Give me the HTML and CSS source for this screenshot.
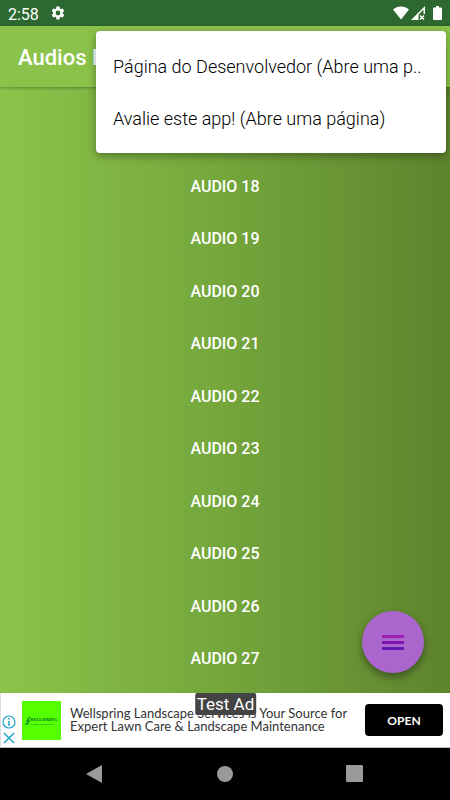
FILE: index.html
```html
<!DOCTYPE html>
<html lang="pt-BR">

    <head>
        <meta charset="UTF-8">
        <meta name="viewport" content="width=device-width, initial-scale=1.0">
        <title>Audios</title>
        <link rel="stylesheet" href="styles.css">
    </head>

    <body>
        <div class="status-bar">
            <span class="clock">2:58</span>
            <svg class="gear" width="16" height="16" viewBox="0 0 24 24" aria-hidden="true">
                <path fill="#fff" d="M19.14 12.94c.04-.3.06-.61.06-.94 0-.32-.02-.64-.07-.94l2.03-1.58a.49.49 0 0 0 .12-.61l-1.92-3.32a.488.488 0 0 0-.59-.22l-2.39.96c-.5-.38-1.03-.7-1.62-.94l-.36-2.54a.484.484 0 0 0-.48-.41h-3.84c-.24 0-.43.17-.47.41l-.36 2.54c-.59.24-1.13.57-1.62.94l-2.39-.96c-.22-.08-.47 0-.59.22L2.74 8.87c-.12.21-.08.47.12.61l2.03 1.58c-.05.3-.09.63-.09.94s.02.64.07.94l-2.03 1.58a.49.49 0 0 0-.12.61l1.92 3.32c.12.22.37.29.59.22l2.39-.96c.5.38 1.03.7 1.62.94l.36 2.54c.05.24.24.41.48.41h3.84c.24 0 .44-.17.47-.41l.36-2.54c.59-.24 1.13-.56 1.62-.94l2.39.96c.22.08.47 0 .59-.22l1.92-3.32c.12-.22.07-.47-.12-.61l-2.01-1.58zM12 15.6A3.6 3.6 0 1 1 12 8.4a3.6 3.6 0 0 1 0 7.2z"/>
            </svg>
            <div class="status-icons">
                <svg width="16" height="14" viewBox="0 0 16 14" aria-hidden="true">
                    <path fill="#fff" d="M0 3.5C2.2 1.500 5 .5 8 .5s5.800 1 8 3L8 13.500z"/>
                </svg>
                <svg width="14" height="14" viewBox="0 0 14 14" aria-hidden="true">
                    <path fill="#fff" d="M0 14 14 0v8h-1.500V3.600L7.500 8.700V14z"/>
                    <path stroke="#fff" stroke-width="1.5" d="m9 9.500 4 4m0-4-4 4"/>
                </svg>
                <svg class="battery" width="9" height="14" viewBox="0 0 9 14" aria-hidden="true">
                    <path fill="#fff" d="M1 1.500h2V0h3v1.500h2q1 0 1 1V13q0 1-1 1H1q-1 0-1-1V2.500q0-1 1-1z"/>
                </svg>
            </div>
        </div>

        <header class="app-bar">
            <h1>Audios R</h1>
            <div class="menu">
                <button type="button">Página do Desenvolvedor (Abre uma p..</button>
                <button type="button">Avalie este app! (Abre uma página)</button>
            </div>
        </header>

        <main class="content">
            <div class="audio-list">
                <button type="button">AUDIO 18</button>
                <button type="button">AUDIO 19</button>
                <button type="button">AUDIO 20</button>
                <button type="button">AUDIO 21</button>
                <button type="button">AUDIO 22</button>
                <button type="button">AUDIO 23</button>
                <button type="button">AUDIO 24</button>
                <button type="button">AUDIO 25</button>
                <button type="button">AUDIO 26</button>
                <button type="button">AUDIO 27</button>
            </div>
            <button type="button" class="fab" aria-label="Menu">
                <svg width="22" height="15" viewBox="0 0 22 15" aria-hidden="true">
                    <path fill="#9c1fb0" d="M0 0h22v3H0z"/>
                    <path fill="#7d16b0" d="M0 6h22v3H0z"/>
                    <path fill="#5f1bb2" d="M0 12h22v3H0z"/>
                </svg>
            </button>
        </main>

        <div class="ad">
            <div class="ad-controls">
                <button type="button" aria-label="Info">
                    <svg width="14" height="14" viewBox="0 0 14 14" fill="none" stroke="#22a3cc" aria-hidden="true">
                        <circle cx="7" cy="7" r="6" stroke-width="1.2"/>
                        <path stroke-width="1.5" d="M7 3v1.500M7 6v5"/>
                    </svg>
                </button>
                <button type="button" aria-label="Close">
                    <svg width="14" height="14" viewBox="0 0 14 14" fill="none" stroke="#22a3cc" aria-hidden="true">
                        <path stroke-width="1.5" d="m2 2 10 10M12 2 2 12"/>
                    </svg>
                </button>
            </div>
            <svg class="ad-logo" width="39" height="39" viewBox="0 0 39 39" role="img" aria-label="Wellspring Landscape Services">
                <path fill="#5f0" d="M0 0h39v39H0z"/>
                <path fill="none" stroke="#169a28" stroke-width="1.5" d="M3 23h3V18l2-2M4 20h4"/>
                <text x="8" y="20" class="logo-name">WELLSPRING</text>
                <text x="9" y="24" class="logo-sub">LANDSCAPE SERVICES</text>
            </svg>
            <p class="ad-text">Wellspring Landscape Services is Your Source for Expert Lawn Care &amp; Landscape Maintenance</p>
            <button type="button" class="ad-open">OPEN</button>
            <span class="test-label">Test Ad</span>
        </div>

        <nav class="nav-bar">
            <button type="button" aria-label="Back">
                <svg width="18" height="18" viewBox="0 0 18 18" aria-hidden="true"><path fill="#9a9a9a" d="M16 0v18L0 9z"/></svg>
            </button>
            <button type="button" aria-label="Home">
                <svg width="18" height="18" viewBox="0 0 18 18" aria-hidden="true"><circle cx="9" cy="9" r="8" fill="#9a9a9a"/></svg>
            </button>
            <button type="button" aria-label="Recents">
                <svg width="18" height="18" viewBox="0 0 18 18" aria-hidden="true"><rect width="17" height="17" rx="1" fill="#9a9a9a"/></svg>
            </button>
        </nav>
    </body>

</html>
```

FILE: styles.css
```css
* {
    box-sizing: border-box;
}

body {
    font-family: Roboto, sans-serif;
    margin: 0;
    min-height: 100vh;
    display: flex;
    flex-direction: column;
    background-color: #000;
}

button {
    font-family: inherit;
    padding: 0;
    border: none;
    background: none;
    cursor: pointer;
}

svg {
    display: block;
}

.status-bar {
    display: flex;
    align-items: center;
    height: 26px;
    padding: 0 8px;
    background-color: #2d6830;
    color: #fff;
}

.clock {
    padding-top: 2px;
    font-size: 16px;
}

.gear {
    margin-left: 11px;
}

.status-icons {
    display: flex;
    gap: 2px;
    margin-left: auto;
}

.battery {
    margin-left: 6px;
}

.app-bar {
    position: relative;
    z-index: 1;
    display: flex;
    align-items: center;
    height: 61px;
    padding: 2px 18px 0;
    background-color: #8bc34a;
    box-shadow: 0 1px 3px rgba(0, 0, 0, 0.3);
}

h1 {
    margin: 0;
    font-size: 22px;
    font-weight: 500;
    color: #fff;
}

.menu {
    position: absolute;
    top: 5px;
    right: 4px;
    left: 96px;
    padding: 9px 0;
    background-color: #fff;
    border-radius: 4px;
    box-shadow: 0 3px 10px rgba(0, 0, 0, 0.35);
}

.menu button {
    display: block;
    width: 100%;
    height: 52px;
    padding: 0 17px;
    font-size: 18px;
    font-weight: 300;
    text-align: left;
    white-space: nowrap;
    color: #000;
}

.content {
    position: relative;
    flex: 1;
    display: flex;
    padding: 73px 0 8px;
    background: linear-gradient(to right, #8bc34a, #74a63c 50%, #5e842e);
}

.audio-list {
    flex: 1;
    display: grid;
    grid-auto-rows: 1fr;
}

.audio-list button {
    min-height: 48px;
    font-size: 16px;
    font-weight: 500;
    color: #fff;
}

.fab {
    position: absolute;
    right: 26px;
    bottom: 20px;
    display: grid;
    place-items: center;
    width: 62px;
    height: 62px;
    border-radius: 50%;
    background-color: #aa66cc;
    box-shadow: 0 4px 8px rgba(0, 0, 0, 0.4);
}

.ad {
    position: relative;
    display: flex;
    align-items: center;
    height: 55px;
    padding: 0 7px 0 1px;
    background-color: #fff;
    border-left: 1px solid #ddd;
    border-bottom: 1px solid #bbb;
}

.ad-controls {
    display: grid;
    gap: 2px;
    padding-top: 20px;
}

.ad-logo {
    margin-left: 6px;
}

.logo-name {
    font: 700 4px "Liberation Serif", serif;
    fill: #063;
}

.logo-sub {
    font: 700 2px "Liberation Serif", serif;
    fill: #063;
}

.ad-text {
    flex: 1;
    margin: 0 16px 0 9px;
    font-family: Lato, sans-serif;
    font-size: 13px;
    line-height: 13px;
    color: #333;
}

.ad-open {
    width: 78px;
    height: 32px;
    border-radius: 4px;
    background-color: #000;
    color: #fff;
    font-family: Lato, sans-serif;
    font-size: 12px;
    font-weight: 700;
}

.test-label {
    position: absolute;
    top: 0;
    left: 50%;
    transform: translateX(-50%);
    padding: 2px;
    border-radius: 2px;
    background-color: #444;
    color: #fff;
    font-size: 17px;
    line-height: 18px;
    white-space: nowrap;
}

.nav-bar {
    display: flex;
    justify-content: center;
    align-items: center;
    gap: 112px;
    height: 52px;
    background-color: #000;
}
```
